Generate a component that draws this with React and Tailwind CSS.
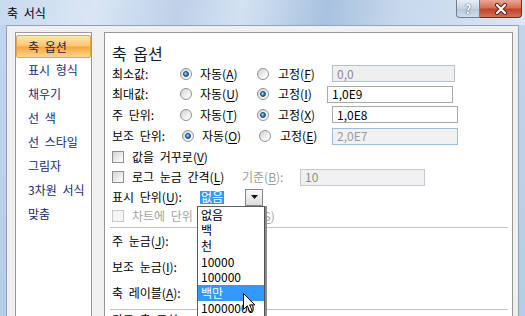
import React from "react";

// 축 서식 dialog, Office 2007 look

const sideItems = ["표시 형식", "채우기", "선 색", "선 스타일", "그림자", "3차원 서식", "맞춤"];

const axisRows = [
  { label: "최소값:", ak: "A", bk: "F", fixed: false, value: "0,0", h: "h-[21px]", lw: "w-[68px]", bw: "w-[54px]", iw: "w-[123px]" },
  { label: "최대값:", ak: "U", bk: "I", fixed: true, value: "1,0E9", h: "h-[20px]", lw: "w-[68px]", bw: "w-[49px]", iw: "w-[126px]" },
  { label: "주 단위:", ak: "T", bk: "X", fixed: true, value: "1,0E8", h: "h-[21px]", lw: "w-[68px]", bw: "w-[54px]", iw: "w-[126px]" },
  { label: "보조 단위:", ak: "O", bk: "E", fixed: false, value: "2,0E7", h: "h-[22px]", lw: "w-[70px]", bw: "w-[52px]", iw: "w-[126px]", focus: true },
];

const listItems = ["없음", "백", "천", "10000", "100000", "백만", "10000000", "100000000", "1000000000"];

const U = ({ children }) => <span className="underline underline-offset-[2px]">{children}</span>;

const Radio = ({ on }) => (
  <span className="flex h-[12px] w-[12px] shrink-0 items-center justify-center rounded-full border border-[#8e9196] bg-[linear-gradient(135deg,#cfd1d4,#f7f7f7_70%,#ffffff)]">
    {on && (
      <span className="h-[6px] w-[6px] rounded-full border border-[#16406e] bg-[radial-gradient(circle_at_35%_35%,#a7dcff,#2a86d8_55%,#0d4f95)]" />
    )}
  </span>
);

const Check = ({ dim }) => (
  <span
    className={
      "block h-[12px] w-[12px] shrink-0 border " +
      (dim
        ? "border-[#c6c6c6] bg-[#f6f6f6]"
        : "border-[#8e8f8f] bg-[linear-gradient(135deg,#d2d3d4,#f4f4f4_70%,#ffffff)]")
    }
  />
);

const Sep = () => <div className="-ml-[2px] h-px bg-[#c3c3c3]" />;

const App = () => {
  return (
    <div className="relative flex h-[316px] w-[525px] flex-col overflow-hidden bg-[linear-gradient(180deg,#c2d6ec,#b6cde7)] font-['Noto_Sans_CJK_KR','Noto_Sans',sans-serif] text-[12px] text-black [word-spacing:3px]">
      {/* title bar */}
      <div className="flex h-[25px] shrink-0 items-start bg-[linear-gradient(100deg,#c8daee_0%,#d9e6f4_18%,#bdd1e8_34%,#d3e2f2_46%,#a9c2df_62%,#c6d8ec_76%,#dae7f4_100%)]">
        <span className="ml-[7px] mt-[5px] leading-[16px]">축 서식</span>
        <div className="ml-auto mr-[3px] flex">
          <div className="flex h-[18px] w-[24px] items-center justify-center rounded-bl-[4px] border border-t-0 border-[#6e7f95] bg-[linear-gradient(180deg,#e7eef6,#c6d3e2_50%,#b3c4d8_51%,#d2dde9)]">
            <span className="text-[13px] font-bold leading-none text-white [text-shadow:0_0_1px_#3b4a5e,0_0_1px_#3b4a5e]">?</span>
          </div>
          <div className="flex h-[18px] w-[42px] items-center justify-center rounded-br-[4px] border border-l-0 border-t-0 border-[#7a2a1d] bg-[linear-gradient(180deg,#eaa694,#d47158_45%,#c0422a_55%,#d6705a)]">
            <svg width="14" height="12" viewBox="0 0 14 12">
              <path d="M3 2 L11 10 M11 2 L3 10" stroke="#5a1e14" strokeWidth="4" strokeLinecap="round" />
              <path d="M3 2 L11 10 M11 2 L3 10" stroke="#ffffff" strokeWidth="2.2" strokeLinecap="round" />
            </svg>
          </div>
        </div>
      </div>

      {/* body */}
      <div className="ml-[6px] flex w-[513px] flex-1 gap-[12px] border border-b-0 border-[#8ea3bd] bg-[#f0f0f0] pl-[8px] pt-[6px]">
        {/* sidebar */}
        <div className="w-[77px] shrink-0 border border-[#9a9a9a] bg-white pt-[2px] text-[#16297a]">
          <div className="flex h-[23px] items-center rounded-[2px] border border-[#e3a54a] bg-[linear-gradient(180deg,#fde7b6_0%,#fcc770_45%,#f8a842_55%,#fcd68a_100%)] pl-[11px] text-[#1b2450]">
            축 옵션
          </div>
          {sideItems.map((s) => (
            <div key={s} className="flex h-[24px] items-center pl-[12px]">
              {s}
            </div>
          ))}
        </div>

        {/* panel */}
        <div className="w-[409px] shrink-0 border border-[#979797] bg-white pl-[7px] pr-[4px] pt-[10px]">
          <div className="flex h-[20px] items-center text-[16px] text-[#111827]">축 옵션</div>

          {axisRows.map((r) => (
            <div key={r.label} className={"flex items-center " + r.h}>
              <span className={"shrink-0 " + r.lw}>{r.label}</span>
              <Radio on={!r.fixed} />
              <span className="ml-[8px] w-[57px] shrink-0">
                자동(<U>{r.ak}</U>)
              </span>
              <Radio on={r.fixed} />
              <span className={"ml-[9px] shrink-0 " + r.bw}>
                고정(<U>{r.bk}</U>)
              </span>
              <div
                className={
                  "flex h-[17px] items-center border pl-[4px] " +
                  r.iw +
                  " " +
                  (r.fixed
                    ? "border-[#a7abb0] bg-white text-black"
                    : r.focus
                    ? "border-[#9dbde0] bg-[#f2f0f0] text-[#9a9a9a]"
                    : "border-[#b2c1d2] bg-[#efefef] text-[#8c8c8c]")
                }
              >
                {r.value}
              </div>
            </div>
          ))}

          <div className="flex h-[19px] items-center">
            <Check />
            <span className="ml-[8px]">
              값을 거꾸로(<U>V</U>)
            </span>
          </div>

          <div className="flex h-[22px] items-center">
            <Check />
            <span className="ml-[8px] w-[110px] shrink-0">
              로그 눈금 간격(<U>L</U>)
            </span>
            <span className="w-[58px] shrink-0 text-[#9d9d9d]">
              기준(<U>B</U>):
            </span>
            <div className="flex h-[17px] w-[125px] items-center border border-[#c3c9d0] bg-[#f0f0f0] pl-[4px] text-[#8c8c8c]">
              10
            </div>
          </div>

          <div className="flex h-[18px] items-center">
            <span className="w-[85px] shrink-0">
              표시 단위(<U>U</U>):
            </span>
            <div className="flex h-[18px] w-[68px] items-center">
              <span className="ml-[3px] flex h-[13px] items-center bg-[#3399ff] px-[1px] text-white">없음</span>
              <div className="ml-auto mr-[2px] flex h-[17px] w-[18px] items-center justify-center border border-[#8a8a8a] bg-[linear-gradient(180deg,#fafafa,#dcdcdc)]">
                <svg width="7" height="4" viewBox="0 0 7 4">
                  <path d="M0 0 H7 L3.5 4 Z" fill="#111" />
                </svg>
              </div>
            </div>
          </div>

          <div className="flex h-[20px] items-center text-[#a3a3a3]">
            <Check dim />
            <span className="ml-[8px] whitespace-nowrap">
              차트에 단위 레이블 표시(<U>S</U>)
            </span>
          </div>

          <div className="mt-[1px]">
            <Sep />
          </div>

          <div className="flex h-[26px] items-center">
            주 눈금(<U>J</U>):
          </div>
          <div className="flex h-[26px] items-center">
            보조 눈금(<U>I</U>):
          </div>
          <div className="flex h-[26px] items-center">
            축 레이블(<U>A</U>):
          </div>

          <div className="mt-[3px]">
            <Sep />
          </div>
          <div className="flex h-[20px] items-start pt-[1px]">가로 축 교차:</div>
        </div>
      </div>

      {/* open dropdown list */}
      <div className="absolute left-[197px] top-[206px] w-[68px] border border-[#5c5c5c] border-r-[#505050] bg-white shadow-[2px_0_0_#8c8c8c]">
        {listItems.map((t, i) => (
          <div
            key={t}
            className={
              "flex h-[15.6px] items-center whitespace-nowrap pl-[3px] " +
              (i === 5 ? "bg-[#3399ff] text-white" : "text-black")
            }
          >
            {t}
          </div>
        ))}
      </div>

      {/* mouse cursor */}
      <svg className="absolute left-[243px] top-[293px]" width="13" height="21" viewBox="0 0 13 21">
        <path
          d="M0.5 0.5 L0.5 16.5 L4.3 12.8 L6.8 18.8 L9.2 17.8 L6.7 11.9 L11.8 11.9 Z"
          fill="#ffffff"
          stroke="#000000"
          strokeWidth="1"
          strokeLinejoin="miter"
        />
      </svg>
    </div>
  );
};

export default App;
